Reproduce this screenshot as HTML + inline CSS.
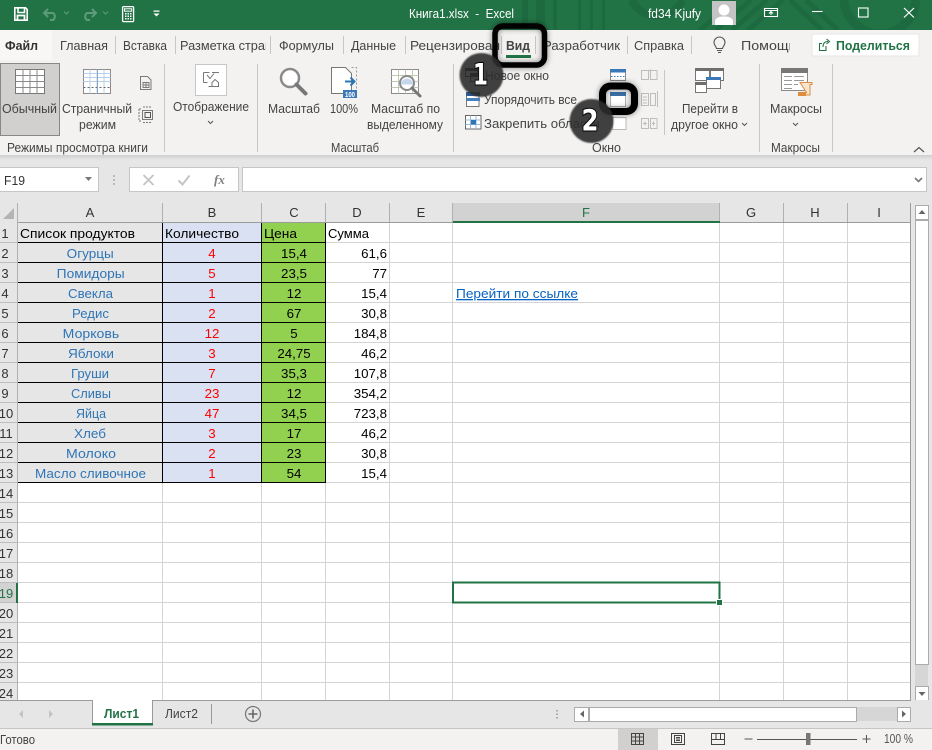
<!DOCTYPE html>
<html lang="ru">
<head>
<meta charset="utf-8">
<title>Книга1.xlsx - Excel</title>
<style>
html,body{margin:0;padding:0;width:932px;height:750px;overflow:hidden;background:#e6e6e6}
svg{display:block;position:absolute;left:0;top:0}
text{font-family:"Liberation Sans","DejaVu Sans",sans-serif;white-space:pre}
.r{font-size:12.5px;fill:#444}
.t{font-size:12.5px;fill:#444}
.c{font-size:13px;fill:#000}
.a{font-size:13px;fill:#2e75b6}
.b{font-size:13.3px;fill:#ff0000;text-anchor:middle}
.n{font-size:13.3px;fill:#000;text-anchor:middle}
.d{font-size:13.3px;fill:#000;text-anchor:end}
.h{font-size:13px;fill:#333;text-anchor:middle}
.dg{font-family:"DejaVu Sans",sans-serif;font-size:29px;font-weight:bold;fill:#fff;stroke:#000;stroke-width:2px;paint-order:stroke}
</style>
</head>
<body>
<svg width="932" height="750" viewBox="0 0 932 750" xmlns="http://www.w3.org/2000/svg">
<defs>
<filter id="bl" x="-30%" y="-30%" width="160%" height="160%"><feGaussianBlur stdDeviation="3"/></filter>
<filter id="sf" x="-10%" y="-10%" width="120%" height="120%"><feGaussianBlur stdDeviation="0.7"/></filter>
<linearGradient id="sh" x1="0" y1="0" x2="0" y2="1"><stop offset="0" stop-color="#cfcfcf"/><stop offset="1" stop-color="#e6e6e6"/></linearGradient>
</defs>

<!-- title bar -->
<rect x="0" y="0" width="932" height="30" fill="#217346"/>
<g fill="#1e6a40" stroke="none">
<rect x="522" y="0" width="6" height="30"/><rect x="536" y="0" width="9" height="30"/><rect x="553" y="0" width="4" height="30"/>
<rect x="578" y="0" width="3" height="30"/><rect x="590" y="0" width="3" height="30"/><rect x="602" y="0" width="3" height="30"/>
</g>
<g fill="none" stroke="#1e6a40">
<path d="M632 0a26 22 0 0 0 50 0" stroke-width="8"/>
<path d="M700 30L735 0M716 30L751 0M732 30L767 0M748 30L783 0" stroke-width="5"/>
<path d="M790 0L822 30M806 0L838 30" stroke-width="5"/>
<circle cx="880" cy="-2" r="36" stroke-width="9"/>
</g>
<!-- save -->
<g fill="none" stroke="#fff" stroke-width="1.6">
<path d="M14.8 7.8H25.5L27.2 9.5V20.2H14.8Z"/>
<path d="M18 8V12.5H24.5V8"/>
<path d="M17.5 20V15.5H24.5V20" stroke-width="1.8"/>
</g>
<!-- undo/redo -->
<g fill="none" stroke="#5e9b7a" stroke-width="2">
<path d="M48 9L44 13L48 17M44.5 13H53A4.2 4.2 0 0 1 53 20H50"/>
<path d="M92 9L96 13L92 17M95.5 13H87A4.2 4.2 0 0 0 87 20H90"/>
<path d="M64 11.5L66.5 14L69 11.5M103 11.5L105.500 14L108 11.5" stroke-width="1"/>
</g>
<!-- calc -->
<g fill="none" stroke="#fff" stroke-width="1.3">
<rect x="122.600" y="6.600" width="11" height="15" rx="1"/>
<rect x="124.500" y="8.800" width="7.200" height="2.400" stroke-width="1"/>
</g>
<path d="M125 13h1.500v1.500H125zM127.500 13H129v1.500h-1.500zM130 13h1.500v1.500H130zM125 15.500h1.500V17H125zM127.500 15.500H129V17h-1.500zM130 15.500h1.500V17H130zM125 18h1.500v1.500H125zM127.500 18H129v1.500h-1.500zM130 18h1.500v1.500H130z" fill="#fff"/>
<path d="M153.500 10.500h6v1.200h-6zM153.500 13.500h6L156.500 16.500z" fill="#fff"/>
<text x="409" y="18" font-size="12.5" fill="#fff" textLength="105" lengthAdjust="spacingAndGlyphs">Книга1.xlsx  -  Excel</text>
<text x="648" y="18" font-size="12.5" fill="#fff" textLength="53" lengthAdjust="spacingAndGlyphs">fd34 Kjufy</text>
<rect x="712" y="1" width="24" height="24" fill="#c4c4c4"/>
<circle cx="724" cy="10" r="5.500" fill="#fff"/>
<path d="M715 25v-3.500c0-3.500 4-5 9-5s9 1.500 9 5V25z" fill="#fff"/>
<g fill="none" stroke="#fff" stroke-width="1.100">
<path d="M764.500 8.500h13v8h-13zM764.500 10.500h13M771 15V11.500M769 13.500l2-2 2 2"/>
<path d="M812 11.500H822.500"/>
<rect x="858.500" y="8" width="9.500" height="9"/>
<path d="M904 8L914 17.500M914 8L904 17.500" stroke-width="1.200"/>
</g>

<!-- ribbon bg -->
<rect x="0" y="30" width="932" height="125" fill="#f3f2f1"/>
<rect x="0" y="30" width="52" height="30" fill="#f8f7f6"/>
<rect x="0" y="155" width="932" height="47" fill="#e6e6e6"/>
<rect x="0" y="155" width="932" height="5" fill="url(#sh)"/>

<!-- tabs -->
<text x="5" y="50" font-size="12.500" font-weight="bold" fill="#333" textLength="33" lengthAdjust="spacingAndGlyphs">Файл</text>
<text class="t" x="60" y="50" textLength="48" lengthAdjust="spacingAndGlyphs">Главная</text>
<text class="t" x="123" y="50" textLength="44" lengthAdjust="spacingAndGlyphs">Вставка</text>
<text class="t" x="180" y="50" textLength="92" lengthAdjust="spacingAndGlyphs">Разметка стран</text>
<rect x="266" y="36" width="8" height="20" fill="#f3f2f1"/>
<text class="t" x="279" y="50" textLength="55" lengthAdjust="spacingAndGlyphs">Формулы</text>
<text class="t" x="351" y="50" textLength="45" lengthAdjust="spacingAndGlyphs">Данные</text>
<text class="t" x="410" y="50" textLength="90" lengthAdjust="spacingAndGlyphs">Рецензирован</text>
<text x="506" y="50" font-size="12.500" font-weight="bold" fill="#444" textLength="24" lengthAdjust="spacingAndGlyphs">Вид</text>
<rect x="506" y="55" width="25" height="3" fill="#217346"/>
<text class="t" x="543" y="50" textLength="77" lengthAdjust="spacingAndGlyphs">Разработчик</text>
<text class="t" x="634" y="50" textLength="50" lengthAdjust="spacingAndGlyphs">Справка</text>
<text class="t" x="741" y="50" textLength="55" lengthAdjust="spacingAndGlyphs">Помощь</text>
<rect x="790" y="36" width="8" height="20" fill="#f3f2f1"/>
<path d="M115.500 36V54M175.500 36V54M270.500 36V54M343.500 36V54M405.500 36V54M501.500 36V54M535.500 36V54M627.500 36V54M691.500 36V54" stroke="#c8c6c4" fill="none"/>
<!-- bulb -->
<g fill="none" stroke="#555" stroke-width="1.100">
<path d="M716.500 48.500c0-2-2.500-3-2.500-6a5.500 5.500 0 0 1 11 0c0 3-2.500 4-2.500 6z"/>
<path d="M717 50.500h5M718 52.500h3"/>
</g>
<!-- share -->
<rect x="812" y="34" width="107" height="22" rx="1" fill="#fff" stroke="#e6e5e4"/>
<g fill="none" stroke="#217346" stroke-width="1.100">
<path d="M826 46v4.500H819.500V43.500H822"/>
<path d="M823 47c0-4 2-5.500 5-5.500M826.500 39l3 2.500-3 2.500"/>
</g>
<text x="836" y="50" font-size="12.500" font-weight="bold" fill="#217346" textLength="74" lengthAdjust="spacingAndGlyphs">Поделиться</text>

<!-- Group: views -->
<rect x="0.500" y="63.500" width="59" height="72" fill="#d2d0ce" stroke="#8a8886"/>
<rect x="15.500" y="69.500" width="29" height="24" fill="#fff" stroke="#777"/>
<path d="M15.500 75.500h29M15.500 81.500h29M15.500 87.500h29M23 69.500v24M30 69.500v24M37 69.500v24" stroke="#8a8a8a" fill="none"/>
<rect x="83.500" y="69.500" width="27" height="24" fill="#fff" stroke="#8a8a8a"/>
<path d="M83.500 73.500h27M83.500 77.500h27M83.500 81.500h27M90 69.500v24M97 69.500v24M104 69.500v24" stroke="#b9d0ea" fill="none"/>
<path d="M83.500 87.500h27" stroke="#666" stroke-dasharray="2 2"/><path d="M97.500 69.500v24" stroke="#8aa6c6"/>
<g fill="none" stroke="#7a7a7a">
<path d="M140.500 76.500h7l3.500 3.500v9.500h-10.500z"/><path d="M143 82.500h6v5h-6zM146 82.500v5M143 85h6"/>
<rect x="142.500" y="110.500" width="10" height="9"/>
<rect x="145" y="112.500" width="5.500" height="5" stroke="#555"/>
<path d="M139 109v12M139 109h2M139 121h2M143 107h9M143 122.500h9" stroke-dasharray="2 1"/>
</g>
<text class="r" x="2" y="113" textLength="55" lengthAdjust="spacingAndGlyphs">Обычный</text>
<text class="r" x="62" y="113" textLength="70" lengthAdjust="spacingAndGlyphs">Страничный</text>
<text class="r" x="79" y="129" textLength="37" lengthAdjust="spacingAndGlyphs">режим</text>
<text class="r" x="7" y="152" textLength="141" lengthAdjust="spacingAndGlyphs">Режимы просмотра книги</text>
<path d="M164.500 64V152M257.500 64V152M453.500 64V152M664.500 70V135M759.500 64V152M832.500 64V152" stroke="#c8c6c4" fill="none"/>

<!-- display -->
<rect x="195.500" y="64.500" width="31" height="31" fill="#fff" stroke="#c8c6c4"/>
<g fill="none" stroke="#777">
<path d="M203.500 72.500h6M203.500 72.500v10M203.500 82.500h4M212 72.500h7"/>
<path d="M207 75l3 3.500 4-5"/>
<path d="M212 86.500v-4l3-3 3.500 3v4zM208.500 86.500h3"/>
</g>
<text class="r" x="173" y="111" textLength="76" lengthAdjust="spacingAndGlyphs">Отображение</text>
<path d="M208 121l2.500 2.500L213 121" fill="none" stroke="#555"/>

<!-- zoom -->
<circle cx="290" cy="78" r="9" fill="#fff" stroke="#8a8a8a" stroke-width="2.500"/>
<path d="M296.500 84.500L305.500 93.500" stroke="#777" stroke-width="4" stroke-linecap="round"/>
<text class="r" x="268" y="113" textLength="52" lengthAdjust="spacingAndGlyphs">Масштаб</text>
<path d="M331.500 67.500h14l6 6V93.500h-20z" fill="#fff" stroke="#777"/>
<path d="M351.500 67.500h5v22" fill="none" stroke="#999" stroke-dasharray="2 2"/>
<path d="M345 81.500h9M350.500 77.500l4 4-4 4" fill="none" stroke="#2e75b6" stroke-width="2"/>
<rect x="343" y="90" width="14" height="8" fill="#3b78b8"/>
<text x="345" y="97" font-size="7" font-weight="bold" fill="#fff" textLength="10" lengthAdjust="spacingAndGlyphs">100</text>
<text class="r" x="330" y="113" textLength="28" lengthAdjust="spacingAndGlyphs">100%</text>
<rect x="391.500" y="69.500" width="27" height="24" fill="#fff" stroke="#8a8a8a"/>
<path d="M391.500 75.500h27M391.500 81.500h27M391.500 87.500h27M398.500 69.500v24M405.500 69.500v24M412.500 69.500v24" stroke="#bfcab5" fill="none"/>
<circle cx="407" cy="83" r="7" fill="#fff" stroke="#8a8a8a" stroke-width="2"/>
<path d="M401 84.500a6 6 0 0 1 12 0z" fill="#c4d7ec"/>
<path d="M412 88L420 96" stroke="#777" stroke-width="3" stroke-linecap="round"/>
<text class="r" x="371" y="113" textLength="69" lengthAdjust="spacingAndGlyphs">Масштаб по</text>
<text class="r" x="367" y="129" textLength="76" lengthAdjust="spacingAndGlyphs">выделенному</text>
<text class="r" x="331" y="152" textLength="48" lengthAdjust="spacingAndGlyphs">Масштаб</text>

<!-- window -->
<path d="M465.500 68.500h12v8h-12zM470.500 73.500h12v8h-12z" fill="#fff" stroke="#222"/>
<path d="M465 68h13v3h-13zM470 73h13v3h-13z" fill="#111"/>
<text class="r" x="485" y="80" textLength="64" lengthAdjust="spacingAndGlyphs">Новое окно</text>
<rect x="466.500" y="92.500" width="12.500" height="14" fill="#fff" stroke="#777"/>
<rect x="466" y="92" width="14" height="4" fill="#2b5c94"/><rect x="466" y="98" width="14" height="3" fill="#4a80bb"/>
<text class="r" x="484" y="104" textLength="93" lengthAdjust="spacingAndGlyphs">Упорядочить все</text>
<rect x="465.500" y="115.500" width="15.500" height="13.500" fill="#fff" stroke="#666"/>
<path d="M465.500 120h15.500M465.500 124.500h15.500M470.500 115.500v13.500M476 115.500v13.500" stroke="#9ab9d8" fill="none"/>
<rect x="471" y="120" width="5" height="4.500" fill="#2e75b6"/>
<text class="r" x="484" y="128" textLength="116" lengthAdjust="spacingAndGlyphs">Закрепить области</text>
<rect x="610.500" y="69.500" width="15" height="11" fill="#fff" stroke="#888"/>
<rect x="610" y="69" width="16" height="3.500" fill="#3b78b8"/>
<path d="M611 76.500h14" stroke="#3b78b8" stroke-dasharray="1.500 1.500"/>
<rect x="612.500" y="117.500" width="13.500" height="12" fill="#fff" stroke="#bbb"/>
<rect x="610.500" y="92.500" width="15" height="14" fill="#fff" stroke="#666" stroke-dasharray="1 1"/>
<rect x="610" y="92" width="16" height="4" fill="#3b6ea5"/>
<g fill="none" stroke="#bdbdbd">
<path d="M641.500 70.500h7v9h-7zM650.500 70.500h6.500v9h-6.500zM648.500 71l2 -1.500"/>
<path d="M641.500 93.500h7v12h-7zM650.500 93.500h5v12h-5zM643 97h4M643 100h4M643 103h4M657.500 91v16"/>
<path d="M641.500 118.500h7v10h-7zM650.500 118.500h6.500v10h-6.500zM643 123.500h4M645 121.500v4M652 123.500h3M653.500 121.500v4"/>
</g>
<path d="M695.500 68.500h14v12h-14zM710.500 68.500h13v12h-13zM695.500 82.500h11v10h-11z" fill="#fff" stroke="#777"/>
<path d="M695 68h15v3h-15zM710 68h14v3h-14zM695 82h12v3h-12z" fill="#6e6e6e"/>
<rect x="706.500" y="77.500" width="14" height="11" fill="#fff" stroke="#777"/>
<rect x="706" y="77" width="15" height="3" fill="#3b78b8"/>
<text class="r" x="682" y="113" textLength="56" lengthAdjust="spacingAndGlyphs">Перейти в</text>
<text class="r" x="671" y="129" textLength="67" lengthAdjust="spacingAndGlyphs">другое окно</text>
<path d="M742 123l2.500 2.500L747 123" fill="none" stroke="#555"/>
<text class="r" x="592" y="152" textLength="29" lengthAdjust="spacingAndGlyphs">Окно</text>

<!-- macros -->
<rect x="781.500" y="68.500" width="26" height="22" fill="#fff" stroke="#8a8a8a"/>
<rect x="781" y="68" width="27" height="5" fill="#777"/>
<path d="M784 76.500h8M794 76.500h10M784 80.500h8M794 80.500h10M784 84.500h8M794 84.500h4M784 88.500h8" stroke="#9a9a9a" fill="none"/>
<path d="M800 82.500h12v2h-2v10.500h-11.500v-2.500h8z" fill="#f6e5cf" stroke="#e08b3d"/>
<rect x="798" y="92" width="8" height="4" fill="#e08b3d"/>
<text class="r" x="770" y="113" textLength="52" lengthAdjust="spacingAndGlyphs">Макросы</text>
<path d="M793 123l2.500 2.500L798 123" fill="none" stroke="#555"/>
<text class="r" x="771" y="152" textLength="49" lengthAdjust="spacingAndGlyphs">Макросы</text>
<path d="M914 152l5-4.500 5 4.500" fill="none" stroke="#555" stroke-width="1.200"/>

<!-- formula bar -->
<rect x="-1" y="167.500" width="99.500" height="24" fill="#fff" stroke="#c6c6c6"/>
<text x="4" y="185" font-size="12.500" fill="#333" textLength="21" lengthAdjust="spacingAndGlyphs">F19</text>
<path d="M85 177h7l-3.500 4z" fill="#777"/>
<path d="M114 175v2M114 179v2M114 183v2" stroke="#aaa" stroke-width="1.500"/>
<rect x="129.500" y="167.500" width="109" height="24" fill="#fff" stroke="#c6c6c6"/>
<path d="M143.500 175l10 10M153.500 175l-10 10" stroke="#c4c4c4" stroke-width="1.800" fill="none"/>
<path d="M178.500 180.500l4 4 7-9" stroke="#c4c4c4" stroke-width="2" fill="none"/>
<text x="214" y="184" font-size="13" font-style="italic" font-weight="bold" fill="#808080" style="font-family:'Liberation Serif',serif">fx</text>
<rect x="242.500" y="167.500" width="684" height="24" fill="#fff" stroke="#c6c6c6"/>
<path d="M915 178l3.500 3.500 3.500-3.500" fill="none" stroke="#777" stroke-width="1.600"/>

<!-- sheet -->
<rect x="18" y="223" width="893" height="477" fill="#fff"/>
<!-- header bgs -->
<rect x="0" y="203" width="911" height="20" fill="#e6e6e6"/>
<rect x="0" y="203" width="18" height="497" fill="#e6e6e6"/>
<rect x="453" y="203" width="267" height="19" fill="#d2d2d2"/>
<rect x="0" y="583" width="18" height="20" fill="#d2d2d2"/>
<path d="M14 208v11H3z" fill="#b4b4b4"/>
<path d="M17.500 203V700M162.500 203V222M261.500 203V222M325.500 203V222M389.500 203V222M452.500 203V222M719.500 203V222M783.500 203V222M847.500 203V222" stroke="#b0b0b0" fill="none"/>
<path d="M18 222.500H911" stroke="#9b9b9b"/>
<path d="M0 242.500h17M0 262.500h17M0 282.500h17M0 302.500h17M0 322.500h17M0 342.500h17M0 362.500h17M0 382.500h17M0 402.500h17M0 422.500h17M0 442.500h17M0 462.500h17M0 482.500h17M0 502.500h17M0 522.500h17M0 542.500h17M0 562.500h17M0 582.500h17M0 602.500h17M0 622.500h17M0 642.500h17M0 662.500h17M0 682.500h17" stroke="#bdbdbd" fill="none"/>
<rect x="453" y="221" width="267" height="2" fill="#217346"/>
<rect x="16" y="583" width="2" height="20" fill="#217346"/>

<!-- gridlines -->
<path d="M18 242.500H911M18 262.500H911M18 282.500H911M18 302.500H911M18 322.500H911M18 342.500H911M18 362.500H911M18 382.500H911M18 402.500H911M18 422.500H911M18 442.500H911M18 462.500H911M18 482.500H911M18 502.500H911M18 522.500H911M18 542.500H911M18 562.500H911M18 582.500H911M18 602.500H911M18 622.500H911M18 642.500H911M18 662.500H911M18 682.500H911" stroke="#d4d4d4" fill="none"/>
<path d="M162.500 223V700M261.500 223V700M325.500 223V700M389.500 223V700M452.500 223V700M719.500 223V700M783.500 223V700M847.500 223V700" stroke="#d4d4d4" fill="none"/>
<!-- fills -->
<rect x="18" y="223" width="144.500" height="259.500" fill="#e7e6e6"/>
<rect x="162.500" y="223" width="99" height="259.500" fill="#d9e1f2"/>
<rect x="261.500" y="223" width="64" height="259.500" fill="#92d050"/>
<path d="M18 242.500H326M18 262.500H326M18 282.500H326M18 302.500H326M18 322.500H326M18 342.500H326M18 362.500H326M18 382.500H326M18 402.500H326M18 422.500H326M18 442.500H326M18 462.500H326M18 482.500H326M162.500 223V483M261.500 223V483M325.500 223V483" stroke="#000" fill="none"/>
<path d="M910.500 203V700" stroke="#9b9b9b"/>

<!-- col letters -->
<g class="hh">
<text class="h" x="90" y="217">A</text><text class="h" x="212" y="217">B</text><text class="h" x="294" y="217">C</text><text class="h" x="357" y="217">D</text><text class="h" x="421" y="217">E</text><text x="586" y="217" font-size="13" fill="#217346" text-anchor="middle">F</text><text class="h" x="751" y="217">G</text><text class="h" x="815" y="217">H</text><text class="h" x="879" y="217">I</text>
</g>
<!-- rows -->
<text class="h" x="5" y="238">1</text><text class="h" x="5" y="258">2</text><text class="h" x="5" y="278">3</text><text class="h" x="5" y="298">4</text><text class="h" x="5" y="318">5</text><text class="h" x="5" y="338">6</text><text class="h" x="5" y="358">7</text><text class="h" x="5" y="378">8</text><text class="h" x="5" y="398">9</text>
<text class="h" x="6" y="418">10</text><text class="h" x="6" y="438">11</text><text class="h" x="6" y="458">12</text><text class="h" x="6" y="478">13</text><text class="h" x="6" y="498">14</text><text class="h" x="6" y="518">15</text><text class="h" x="6" y="538">16</text><text class="h" x="6" y="558">17</text><text class="h" x="6" y="578">18</text><text x="6" y="598" font-size="13" fill="#217346" text-anchor="middle">19</text><text class="h" x="6" y="618">20</text><text class="h" x="6" y="638">21</text><text class="h" x="6" y="658">22</text><text class="h" x="6" y="678">23</text><text class="h" x="6" y="698">24</text>

<!-- cells -->
<text class="c" x="20" y="238" textLength="115" lengthAdjust="spacingAndGlyphs">Список продуктов</text>
<text class="c" x="165" y="238" textLength="74" lengthAdjust="spacingAndGlyphs">Количество</text>
<text class="c" x="264" y="238" textLength="33" lengthAdjust="spacingAndGlyphs">Цена</text>
<text class="c" x="328" y="238" textLength="41" lengthAdjust="spacingAndGlyphs">Сумма</text>

<text class="a" x="66.700" y="258" textLength="47" lengthAdjust="spacingAndGlyphs">Огурцы</text>
<text class="a" x="56.700" y="278" textLength="68" lengthAdjust="spacingAndGlyphs">Помидоры</text>
<text class="a" x="68" y="298" textLength="45" lengthAdjust="spacingAndGlyphs">Свекла</text>
<text class="a" x="72" y="318" textLength="37" lengthAdjust="spacingAndGlyphs">Редис</text>
<text class="a" x="62.700" y="338" textLength="56.500" lengthAdjust="spacingAndGlyphs">Морковь</text>
<text class="a" x="68" y="358" textLength="46" lengthAdjust="spacingAndGlyphs">Яблоки</text>
<text class="a" x="71" y="378" textLength="38" lengthAdjust="spacingAndGlyphs">Груши</text>
<text class="a" x="71" y="398" textLength="40" lengthAdjust="spacingAndGlyphs">Сливы</text>
<text class="a" x="76" y="418" textLength="30" lengthAdjust="spacingAndGlyphs">Яйца</text>
<text class="a" x="74" y="438" textLength="32" lengthAdjust="spacingAndGlyphs">Хлеб</text>
<text class="a" x="66" y="458" textLength="50" lengthAdjust="spacingAndGlyphs">Молоко</text>
<text class="a" x="35" y="478" textLength="111" lengthAdjust="spacingAndGlyphs">Масло сливочное</text>

<text class="b" x="212" y="258">4</text><text class="b" x="212" y="278">5</text><text class="b" x="212" y="298">1</text><text class="b" x="212" y="318">2</text><text class="b" x="212" y="338">12</text><text class="b" x="212" y="358">3</text><text class="b" x="212" y="378">7</text><text class="b" x="212" y="398">23</text><text class="b" x="212" y="418">47</text><text class="b" x="212" y="438">3</text><text class="b" x="212" y="458">2</text><text class="b" x="212" y="478">1</text>

<text class="n" x="294" y="258">15,4</text><text class="n" x="294" y="278">23,5</text><text class="n" x="294" y="298">12</text><text class="n" x="294" y="318">67</text><text class="n" x="294" y="338">5</text><text class="n" x="294" y="358">24,75</text><text class="n" x="294" y="378">35,3</text><text class="n" x="294" y="398">12</text><text class="n" x="294" y="418">34,5</text><text class="n" x="294" y="438">17</text><text class="n" x="294" y="458">23</text><text class="n" x="294" y="478">54</text>

<text class="d" x="387" y="258">61,6</text><text class="d" x="387" y="278">77</text><text class="d" x="387" y="298">15,4</text><text class="d" x="387" y="318">30,8</text><text class="d" x="387" y="338">184,8</text><text class="d" x="387" y="358">46,2</text><text class="d" x="387" y="378">107,8</text><text class="d" x="387" y="398">354,2</text><text class="d" x="387" y="418">723,8</text><text class="d" x="387" y="438">46,2</text><text class="d" x="387" y="458">30,8</text><text class="d" x="387" y="478">15,4</text>

<text x="456" y="298" font-size="13" fill="#0563c1" text-decoration="underline" textLength="122" lengthAdjust="spacingAndGlyphs">Перейти по ссылке</text>

<!-- selection -->
<rect x="453" y="582.500" width="266.500" height="20" fill="none" stroke="#217346" stroke-width="2"/>
<rect x="716" y="599" width="7" height="7" fill="#fff"/>
<rect x="717" y="600" width="5" height="5" fill="#217346"/>

<!-- v scroll -->
<rect x="911" y="203" width="21" height="497" fill="#e6e6e6"/>
<rect x="915" y="220" width="13" height="466" fill="#d6d6d6"/>
<rect x="915.500" y="220.500" width="13" height="444" fill="#fff" stroke="#ababab"/>
<rect x="915.500" y="205.500" width="13" height="14" fill="#fff" stroke="#ababab"/>
<path d="M918.500 214h7l-3.500-4z" fill="#666"/>
<rect x="915.500" y="686.500" width="13" height="14" fill="#fff" stroke="#ababab"/>
<path d="M918.500 692h7l-3.500 4z" fill="#666"/>

<!-- bottom tabs -->
<rect x="0" y="700" width="932" height="28" fill="#e6e6e6"/>
<path d="M0 700.500H911" stroke="#9b9b9b"/>
<rect x="92.500" y="700" width="60" height="24" fill="#fff"/>
<path d="M92.500 700V724M152.500 700V724" stroke="#9b9b9b" fill="none"/>
<rect x="92" y="723" width="61" height="2.500" fill="#217346"/>
<text x="104" y="718" font-size="12.500" font-weight="bold" fill="#217346" textLength="35" lengthAdjust="spacingAndGlyphs">Лист1</text>
<text x="165" y="718" font-size="12.500" fill="#444" textLength="33" lengthAdjust="spacingAndGlyphs">Лист2</text>
<path d="M211.500 704V724" stroke="#999"/>
<circle cx="253" cy="714" r="7.500" fill="none" stroke="#777" stroke-width="1.200"/>
<path d="M248.500 714h9M253 709.500v9" stroke="#666" stroke-width="1.600"/>
<path d="M23 710v8l-4-4zM49 710v8l4-4z" fill="#c4c4c4"/>
<path d="M557 710v1.500M557 713.500v1.500M557 717v1.500" stroke="#aaa" stroke-width="2"/>
<rect x="574" y="707" width="337" height="14" fill="#d6d6d6"/>
<rect x="574.500" y="707.500" width="14" height="14" fill="#fff" stroke="#ababab"/>
<path d="M584 710.500v7l-4-3.500z" fill="#666"/>
<rect x="589.500" y="707.500" width="267" height="14" fill="#fff" stroke="#ababab"/>
<rect x="897.500" y="707.500" width="13" height="14" fill="#fff" stroke="#ababab"/>
<path d="M902 710.500v7l4-3.500z" fill="#666"/>

<!-- status -->
<rect x="0" y="728" width="932" height="22" fill="#f3f2f1"/>
<path d="M0 728.500H932" stroke="#c6c6c6"/>
<text x="0" y="744" font-size="12.500" fill="#444" textLength="35" lengthAdjust="spacingAndGlyphs">Готово</text>
<rect x="618" y="729" width="40" height="21" fill="#d2d0ce"/>
<path d="M631.500 733.500h12v11h-12zM631.500 737h12M631.500 741h12M635.500 733.500v11M639.500 733.500v11" fill="none" stroke="#444"/>
<path d="M671.500 733.500h13v11h-13zM674.500 735.500h7v7h-7zM676 737.500h4M676 739h4M676 740.500h4" fill="none" stroke="#444"/>
<path d="M711.500 733.500h13v11h-13zM711.500 739.500h13M716 733.500v6M720.500 733.500v6" fill="none" stroke="#444"/>
<path d="M744.500 739h8M757 739.500h100M862.500 739h8M866.500 735v8" stroke="#555" fill="none"/>
<rect x="806" y="733" width="4.500" height="12" fill="#777"/>
<text x="884" y="743" font-size="12.500" fill="#555" textLength="29" lengthAdjust="spacingAndGlyphs">100 %</text>

<!-- annotations -->
<rect x="495" y="26" width="49.500" height="39" rx="8" fill="none" stroke="#000" stroke-opacity=".45" stroke-width="6" filter="url(#bl)"/>
<rect x="495" y="26" width="49.500" height="39" rx="8" fill="none" stroke="#000" stroke-width="5.500"/>
<circle cx="481.500" cy="75" r="22" fill="#2c2c2c" fill-opacity=".9" filter="url(#sf)"/>
<text class="dg" x="473" y="84.500" textLength="15" lengthAdjust="spacingAndGlyphs">1</text>

<rect x="602.500" y="86" width="32" height="25.500" rx="8" fill="none" stroke="#000" stroke-opacity=".45" stroke-width="7" filter="url(#bl)"/>
<rect x="602.500" y="86" width="32" height="25.500" rx="8" fill="none" stroke="#000" stroke-width="7"/>
<circle cx="591.500" cy="121" r="22" fill="#2c2c2c" fill-opacity=".9" filter="url(#sf)"/>
<text class="dg" x="581.500" y="130.500" textLength="17" lengthAdjust="spacingAndGlyphs">2</text>
</svg>
</body>
</html>
